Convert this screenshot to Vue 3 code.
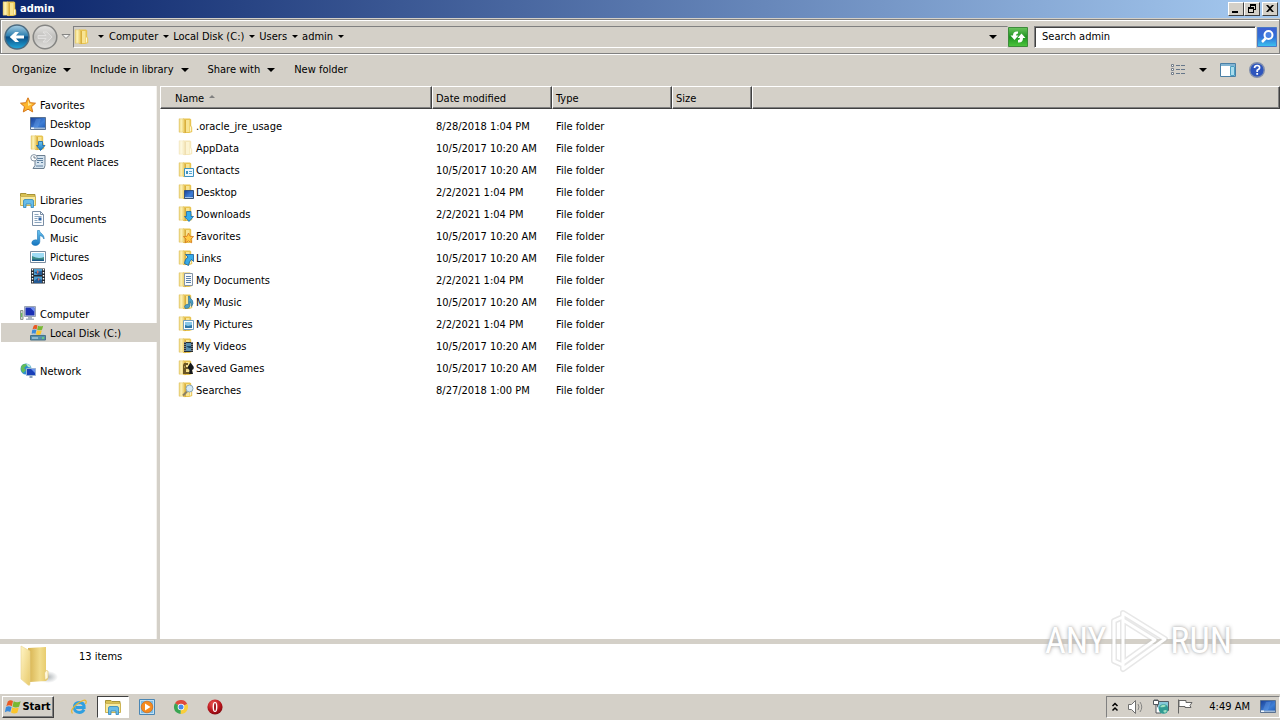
<script setup>
import { ref } from 'vue'

const search = ref('Search admin')
const crumbs = ['Computer', 'Local Disk (C:)', 'Users', 'admin']
const commands = [
  { label: 'Organize', menu: true },
  { label: 'Include in library', menu: true },
  { label: 'Share with', menu: true },
  { label: 'New folder', menu: false }
]
const groups = [
  { label: 'Favorites', icon: 'star', items: [
    { label: 'Desktop', icon: 'desktop' },
    { label: 'Downloads', icon: 'downloads' },
    { label: 'Recent Places', icon: 'recent' }
  ] },
  { label: 'Libraries', icon: 'libraries', items: [
    { label: 'Documents', icon: 'document' },
    { label: 'Music', icon: 'music' },
    { label: 'Pictures', icon: 'picture' },
    { label: 'Videos', icon: 'video' }
  ] },
  { label: 'Computer', icon: 'computer', items: [
    { label: 'Local Disk (C:)', icon: 'disk', selected: true }
  ] },
  { label: 'Network', icon: 'network', items: [] }
]
const files = [
  { name: '.oracle_jre_usage', date: '8/28/2018 1:04 PM', badge: '' },
  { name: 'AppData', date: '10/5/2017 10:20 AM', badge: '', hidden: true },
  { name: 'Contacts', date: '10/5/2017 10:20 AM', badge: 'b-contact' },
  { name: 'Desktop', date: '2/2/2021 1:04 PM', badge: 'b-desktop' },
  { name: 'Downloads', date: '2/2/2021 1:04 PM', badge: 'b-down' },
  { name: 'Favorites', date: '10/5/2017 10:20 AM', badge: 'b-star' },
  { name: 'Links', date: '10/5/2017 10:20 AM', badge: 'b-link' },
  { name: 'My Documents', date: '2/2/2021 1:04 PM', badge: 'b-doc' },
  { name: 'My Music', date: '10/5/2017 10:20 AM', badge: 'b-music' },
  { name: 'My Pictures', date: '2/2/2021 1:04 PM', badge: 'b-picture' },
  { name: 'My Videos', date: '10/5/2017 10:20 AM', badge: 'b-video' },
  { name: 'Saved Games', date: '10/5/2017 10:20 AM', badge: 'b-game' },
  { name: 'Searches', date: '8/27/2018 1:00 PM', badge: 'b-search' }
]
const pinned = [
  { icon: 'ie', label: 'Internet Explorer' },
  { icon: 'libraries', label: 'Windows Explorer', active: true },
  { icon: 'player', label: 'Media Player' },
  { icon: 'chrome', label: 'Chrome' },
  { icon: 'opera', label: 'Opera' }
]
</script>

<template>
  <div class="screen">
    <svg class="defs" aria-hidden="true">
      <defs>
        <linearGradient id="gFold" x1="0" x2="1"><stop offset="0" stop-color="#e9cf72" /><stop offset=".35" stop-color="#fdf3b8" /><stop offset="1" stop-color="#e6c04c" /></linearGradient>
        <linearGradient id="gBig" x1="0" x2="1" y2="1"><stop offset="0" stop-color="#fff4c4" /><stop offset="1" stop-color="#e8ca6c" /></linearGradient>
        <linearGradient id="gBigBack" x1="0" x2="1"><stop offset="0" stop-color="#d6b14e" /><stop offset=".6" stop-color="#f1dc8c" /><stop offset="1" stop-color="#e5c764" /></linearGradient>
        <linearGradient id="gBlue" x1="0" y1="0" x2="1" y2="1"><stop offset="0" stop-color="#183f96" /><stop offset=".6" stop-color="#3f7fd6" /><stop offset="1" stop-color="#1c56b0" /></linearGradient>
        <linearGradient id="gSky" x1="0" y1="0" x2="0" y2="1"><stop offset="0" stop-color="#6cc6f2" /><stop offset="1" stop-color="#1575bf" /></linearGradient>
        <linearGradient id="gSearch" x1="0" y1="0" x2="0" y2="1"><stop offset="0" stop-color="#3f5fd0" /><stop offset=".5" stop-color="#2f6fd8" /><stop offset="1" stop-color="#3cc4f0" /></linearGradient>
        <linearGradient id="gGreen" x1="0" y1="0" x2="0" y2="1"><stop offset="0" stop-color="#6cc45e" /><stop offset=".5" stop-color="#1d9420" /><stop offset="1" stop-color="#4cc63c" /></linearGradient>
        <linearGradient id="gBack" x1="0" y1="0" x2="0" y2="1"><stop offset="0" stop-color="#a9cfe4" /><stop offset=".45" stop-color="#2d7fb0" /><stop offset=".5" stop-color="#0a4d85" /><stop offset="1" stop-color="#22a9dc" /></linearGradient>
        <linearGradient id="gFwd" x1="0" y1="0" x2="0" y2="1"><stop offset="0" stop-color="#e6e5e3" /><stop offset=".5" stop-color="#c0bfbc" /><stop offset="1" stop-color="#e0dfdc" /></linearGradient>
        <radialGradient id="gRed" cx=".4" cy=".3" r=".8"><stop offset="0" stop-color="#ee5a55" /><stop offset=".6" stop-color="#b5121a" /><stop offset="1" stop-color="#6f060c" /></radialGradient>
        <radialGradient id="gShade"><stop offset="0" stop-color="#7d868b" stop-opacity=".6" /><stop offset="1" stop-color="#7d868b" stop-opacity="0" /></radialGradient>
      </defs>
      <symbol id="folder" viewBox="0 0 16 16">
        <path d="M5 .5h7l1.200 1v6l1 2v4.500l-3 1H5z" fill="#e8c450" />
        <path d="M8 2h3.500v12H8z" fill="#f8e493" /><path d="M12 8.500h1.200v5H12z" fill="#fff6cc" />
        <path d="M1 .8h4.500l1.700 1.500V15L5 14.200H1z" fill="url(#gFold)" stroke="#dcbb5a" stroke-width=".4" />
        <path d="M7.300 2v13" stroke="#cfa535" stroke-width=".8" />
      </symbol>
      <symbol id="star" viewBox="0 0 16 16"><path d="M8 .8l2.200 4.900 5.300.5-4 3.500 1.200 5.200L8 12.200l-4.700 2.700 1.200-5.200-4-3.500 5.300-.5z" fill="#fdb62c" stroke="#d5761a" /><path d="M8 3l1.200 3.500 3 .4L8 9z" fill="#ffe99a" /></symbol>
      <symbol id="desktop" viewBox="0 0 16 16"><path d="M.5 1.500h15v12H.5z" fill="url(#gBlue)" stroke="#5b7291" /><path d="M1 11.500h14V13H1z" fill="#9fb9d6" /><path d="M1 11.500h3V13H1z" fill="#f3f8fd" /><path d="M6 3h5L8 11H3z" fill="#6ea4ea" opacity=".35" /></symbol>
      <symbol id="downloads" viewBox="0 0 16 16"><use href="#folder" /><path d="M8.500 6.500h4v4H15L10.500 15.500 6.500 10.500h2z" fill="url(#gSky)" stroke="#1663a4" stroke-width=".8" /></symbol>
      <symbol id="recent" viewBox="0 0 16 16"><path d="M5 1.500h10v10l-1 3H3l2-3z" fill="#d6e4ef" stroke="#6c7f91" /><path d="M7 4.500h6M7 6.500h6M7 8.500h2m2 0h2M6 12h7" stroke="#5e7f9e" /><circle cx="4" cy="3.800" r="3.200" fill="#fff" stroke="#8796a5" /><path d="M4 2v2h2" fill="none" stroke="#4f5f70" stroke-width=".8" /></symbol>
      <symbol id="libraries" viewBox="0 0 16 16"><path d="M.5 1.500H6l1 1h8v3H.5z" fill="#d8c153" stroke="#a79338" /><path d="M.5 4.500h15v9H.5z" fill="#f7eaa0" stroke="#cdb454" /><path d="M3.500 15.500V9q0-1.500 1.500-1.500h7q1.500 0 1.500 1.500v6.500h-2.500V12h-5v3.500z" fill="#68bce8" stroke="#2d85bd" stroke-width=".8" /></symbol>
      <symbol id="document" viewBox="0 0 16 16"><path d="M2.500.5h8l3 3v11h-11z" fill="#fcfdff" stroke="#7b8fa6" /><path d="M10.500.5v3h3" fill="none" stroke="#7b8fa6" /><path d="M4.500 3.500h4m-4 2h7m-7 2h3m-3 2h3m-3 2h7" stroke="#8ba5bd" /><path d="M8.500 6.500h3v3h-3z" fill="#2e65a7" /></symbol>
      <symbol id="music" viewBox="0 0 16 16"><path d="M7.500.5h2c0 3 5 3.500 4.500 8.500-1-2.500-2.500-3-4.200-3.500v6c0 5-8 5-8 1.500 0-2.500 3-3.800 5.700-2.800z" fill="url(#gSky)" stroke="#1b76b5" stroke-width=".6" /></symbol>
      <symbol id="picture" viewBox="0 0 16 16"><path d="M.5 2.500h15v11H.5z" fill="#fff" stroke="#7b8da0" /><path d="M2 4h12v8H2z" fill="#9fdcf5" /><path d="M2 7q4 2 7 2t5-1v4H2z" fill="#3e8d87" /><path d="M2 10.500h12V12H2z" fill="#195989" /></symbol>
      <symbol id="video" viewBox="0 0 16 16"><path d="M1 .5h14v15H1z" fill="#22282f" /><path d="M4 1h8v6H4zM4 8.500h8V15H4z" fill="#4d9dd0" /><path d="M4 4l4 3h4V3zM4 13l4-3 4 2v3H4z" fill="#245a94" /><path d="M7 2l2 2-2 2zM8 10l2 1-2 2z" fill="#c96f68" /><path d="M2.500 1v14m11-14v14" stroke="#fff" stroke-width="1.400" stroke-dasharray="1.500 1.500" /></symbol>
      <symbol id="computer" viewBox="0 0 16 16"><path d="M4.500.5h11v10h-11z" fill="#d6dce6" stroke="#9aa5b3" /><path d="M5.500 1.500h9v8h-9z" fill="#1a30b4" /><path d="M10 1.500h4.500V6z" fill="#6c8df0" /><path d="M8 11h4v1.500h2V14H6v-1.500h2z" fill="#a7b3c1" /><path d="M.5 4.500h2.500v9H.5z" fill="#cbd6ce" stroke="#8b968f" /><path d="M1.700 7v4" stroke="#54b84a" /></symbol>
      <symbol id="winlogo" viewBox="0 0 16 16"><path d="M2.800 2.500Q5.200.3 8 2L6.800 7.200Q4 5.500 1.300 7.200z" fill="#ea5a24" /><path d="M8.700 2.300q3.300 1.700 7 0L14 7.700q-3.500 1.500-6.500-.2z" fill="#78b833" /><path d="M1 8q2.700-1.700 5.600.1l-1.300 5Q2.800 11.500-.2 13.300z" fill="#3a8bdb" /><path d="M7.300 8.300q3.200 1.700 6.500.1L12.300 13.800q-3.200 1.600-6.300-.3z" fill="#fbc52c" /></symbol>
      <symbol id="disk" viewBox="0 0 16 16"><path d="M.5 12l2-3.500h11l2 3.500z" fill="#b4c7d2" /><path d="M.5 10.500h15v4.500H.5z" fill="#5590ae" stroke="#497287" /><path d="M2 13h6" stroke="#d1e5ef" /><path d="M12 12.500h2v1h-2z" fill="#7aff54" /><use href="#winlogo" x="1.500" y="-1" width="12" height="12" /></symbol>
      <symbol id="network" viewBox="0 0 16 16"><circle cx="6" cy="6" r="5.500" fill="#2d8ed0" /><path d="M2 2q4-2 5 0L4 5l2 2-3 3Q-.5 7 2 2z" fill="#63bd58" /><path d="M6 .8q4 0 5 4L8 4z" fill="#b8ead2" /><path d="M6.500 5.500h9v7h-9z" fill="#1940b8" stroke="#9ab3d3" /><path d="M9.500 13h3v2h-3z" fill="#8ba1bc" /><path d="M11 6h4v4z" fill="#6a94ee" /></symbol>
      <symbol id="b-contact" viewBox="0 0 16 16"><path d="M6.500 6.500h9v8h-9z" fill="#eef8ff" stroke="#3d92bf" /><path d="M8 9h2v3H8z" fill="#3d92bf" /><path d="M11 9.500h3m-3 2h3" stroke="#5ba7ce" /></symbol>
      <symbol id="b-desktop" viewBox="0 0 16 16"><path d="M6.500 6.500h9v8h-9z" fill="url(#gBlue)" stroke="#38547a" /><path d="M7 13.500h8" stroke="#a9c7ea" /></symbol>
      <symbol id="b-down" viewBox="0 0 16 16"><path d="M8.500 5.500h4.500v5h2.500L11 15.500 6.500 10.500h2z" fill="#35aeee" stroke="#1767a7" stroke-width=".8" /></symbol>
      <symbol id="b-star" viewBox="0 0 16 16"><path d="M10.500 5l1.500 3.300 3.600.3-2.700 2.500.8 3.700-3.200-1.900-3.300 1.900.9-3.700-2.700-2.500 3.600-.3z" fill="#ffcb45" stroke="#d5761a" stroke-width=".8" /></symbol>
      <symbol id="b-link" viewBox="0 0 16 16"><path d="M7.500 4.500h8v7l-2-2q-2.500 2-3 6l-4-2q0-4 3.500-6.500z" fill="#38aae6" stroke="#155f9d" stroke-width=".8" /></symbol>
      <symbol id="b-doc" viewBox="0 0 16 16"><path d="M6.500 1.500h8v12h-8z" fill="#f8fafc" stroke="#8594a5" /><path d="M8 4.500h5m-5 2h5m-5 2h5m-5 2h5" stroke="#5d82ad" /></symbol>
      <symbol id="b-music" viewBox="0 0 16 16"><path d="M10.500 2h1q0 2 3 4.500 1.500 3-1 6 0-3-1.500-5v4.500q-1 3-4.500 2.500-2-2 0-3.500 1.500-1 3-.5z" fill="#4c9ec4" stroke="#256b93" stroke-width=".6" /></symbol>
      <symbol id="b-picture" viewBox="0 0 16 16"><path d="M5.500 4.500h10v9h-10z" fill="#fafdff" stroke="#75a0bd" /><path d="M7 6h7v6H7z" fill="#87c7e8" /><path d="M7 9l3 1 4-1v3H7z" fill="#2d76a7" /></symbol>
      <symbol id="b-video" viewBox="0 0 16 16"><path d="M6 4h9v10H6z" fill="#262d34" /><path d="M8 5h5v8H8z" fill="#588fae" /><path d="M8 8l3 2h2V8z" fill="#1c496b" /><path d="M7 4v10m7-10v10" stroke="#fff" stroke-width=".8" stroke-dasharray="1 1" /></symbol>
      <symbol id="b-game" viewBox="0 0 16 16"><path d="M6 3h4v2H8v2h2v2H8v3h3v2H5V5z" fill="#6b5725" /><path d="M12.500 2.500l3 4q1 3-1.500 3.500l1 4h-4l.5-4q-2-1-1.500-3.500z" fill="#17191b" /><path d="M6 7h1m1 3h2" stroke="#e9d078" /></symbol>
      <symbol id="b-search" viewBox="0 0 16 16"><path d="M9 9.500l-4 4" stroke="#8b8162" stroke-width="2" /><circle cx="11.500" cy="6.500" r="3.500" fill="#d4e9f5" stroke="#8aa6b6" /></symbol>
      <symbol id="ie" viewBox="0 0 16 16"><path d="M13 10.500q-1.500 3-4.700 3Q3.300 13.200 3.300 8.500T8.300 3.500q4.900 0 4.900 5H5" fill="none" stroke="#2f9fe0" stroke-width="2.800" /><path d="M1.500 14.500Q-1.500 11 6 5q7.500-5.500 9-3 .6 1.300-.6 3" fill="none" stroke="#e9b62f" stroke-width="1.200" /></symbol>
      <symbol id="player" viewBox="0 0 16 16"><path d="M.5.5h15v15H.5z" fill="#bfe0f5" stroke="#4a86b4" /><path d="M2 2h12v12H2z" fill="#7dbbe3" /><circle cx="8" cy="8" r="5.800" fill="#f68a1d" stroke="#d26208" stroke-width=".6" /><path d="M6 4.500L11.500 8 6 11.500z" fill="#fff" /></symbol>
      <symbol id="chrome" viewBox="0 0 16 16"><path d="M8 8L2 4.300A7 7 0 0 1 14.200 5z" fill="#de4a3c" /><path d="M8 8l6.300-3A7 7 0 0 1 7.500 15z" fill="#f9ce3b" /><path d="M8 8L7.500 15A7 7 0 0 1 2 4.300z" fill="#39a552" /><circle cx="8" cy="8" r="3.300" fill="#fff" /><circle cx="8" cy="8" r="2.500" fill="#4689ec" /></symbol>
      <symbol id="opera" viewBox="0 0 16 16"><circle cx="8" cy="8" r="7.600" fill="url(#gRed)" /><ellipse cx="8" cy="8" rx="2.400" ry="5" fill="#fff" /><ellipse cx="8" cy="8" rx="1" ry="4" fill="#9e161b" /></symbol>
      <symbol id="back" viewBox="0 0 26 26"><circle cx="13" cy="13" r="12" fill="url(#gBack)" stroke="#4d6b80" stroke-width="1.500" /><path d="M20 11.500h-8l3-3.500h-3.800L5.800 13l5.400 5H15l-3-3.500h8z" fill="#fff" /></symbol>
      <symbol id="forward" viewBox="0 0 26 26"><circle cx="13" cy="13" r="11.800" fill="url(#gFwd)" stroke="#858583" stroke-width="1.500" /><path d="M6 11.500h8L11 8h3.800l5.400 5-5.400 5H11l3-3.500H6z" fill="#d0cfcd" stroke="#e6e5e3" stroke-width=".8" /></symbol>
      <symbol id="refresh" viewBox="0 0 20 20"><path d="M.5.5h19v19H.5z" fill="url(#gGreen)" stroke="#3d8b3a" /><path d="M10 4.500Q5 4 5 8.500H2.500l4 4.500 4-4.500H8q0-2 2-2z" fill="#fff" /><path d="M10 15.500q5 .5 5-4.500h2.500l-4-4.500-4 4.500H12q0 2-2 2z" fill="#fff" /></symbol>
      <symbol id="find" viewBox="0 0 20 20"><path d="M.5.5h19v19H.5z" fill="url(#gSearch)" stroke="#4a79c5" /><circle cx="11.500" cy="8" r="4" fill="#4a82e4" stroke="#fff" stroke-width="2" /><path d="M8.500 11.500L5 15" stroke="#fff" stroke-width="2.500" /></symbol>
      <symbol id="views" viewBox="0 0 16 14"><path d="M1.500 1.500h2v2h-2zm0 4h2v2h-2zm0 4h2v2h-2z" fill="#fff" stroke="#737d89" /><path d="M6 2.500h4m1 0h4M6 6.500h4m1 0h4m-9 4h4m1 0h4" stroke="#66778a" /></symbol>
      <symbol id="pane" viewBox="0 0 16 14"><path d="M.5.5h15v13H.5z" fill="#fff" stroke="#4a7fa5" /><path d="M1 1h14v2H1z" fill="#81b4d3" /><path d="M10.500 3.500h4v9h-4z" fill="#a9dced" stroke="#4b9fc2" /></symbol>
      <symbol id="help" viewBox="0 0 16 16"><circle cx="8" cy="8" r="7.300" fill="#2e55bd" stroke="#8390ad" stroke-width="1.400" /><path d="M5.500 6q.2-2.500 2.700-2.500T10.600 6Q10.300 7.300 8.200 8.200V10" fill="none" stroke="#fff" stroke-width="1.700" /><path d="M7.300 11h1.800v1.800H7.300z" fill="#fff" /></symbol>
      <symbol id="sound" viewBox="0 0 18 16"><path d="M1.500 5.500h3l4-4v13l-4-4h-3z" fill="#fff" stroke="#70706f" /><path d="M11 5q2 3 0 6m2-8q3.500 5 0 10" fill="none" stroke="#858583" /></symbol>
      <symbol id="net" viewBox="0 0 16 16"><path d="M4.500 2.500h11v9h-11z" fill="#85c8d9" stroke="#525c64" /><path d="M.5 1.500h5v4h-5zM3 5.500V14h5" fill="#fff" stroke="#50575d" /><path d="M2 0v2m2-2v2" stroke="#50575d" /><circle cx="10.500" cy="10" r="4.800" fill="#309b93" /><path d="M7 8q3-4 6-1-3 2-6 1zM10 12q3-2 4 0l-2 2z" fill="#9de0c1" /></symbol>
      <symbol id="flag" viewBox="0 0 16 16"><path d="M1.500.5v14M2 1.500h7v2h6l-2 3 1 2H8v-1H2z" fill="#fff" stroke="#666665" /></symbol>
      <symbol id="bigfolder" viewBox="0 0 38 42">
        <ellipse cx="28" cy="32" rx="10" ry="6" fill="url(#gShade)" />
        <path d="M8 3l18-1v24l2 2v6l-2 2-16 1z" fill="url(#gBigBack)" />
        <path d="M24.500 28q1.500-4 3.500-2v7l-3 2z" fill="#fff8dc" stroke="#dfc269" stroke-width=".6" />
        <path d="M1 1l9 5v33q0 2-2 1l-7-6z" fill="url(#gBig)" stroke="#e8d591" stroke-width=".6" />
      </symbol>
    </svg>

    <header class="title">
      <svg class="i16"><use href="#folder" /></svg>
      <h1>admin</h1>
      <div class="winbtns">
        <button aria-label="Minimize"><svg viewBox="0 0 12 10"><path d="M2 7h6v2H2z" /></svg></button>
        <button aria-label="Restore"><svg viewBox="0 0 12 10"><path d="M4 0h6v6H8V5h1V2H5v1H4zM2 3h6v6H2zm1 2v3h4V5z" fill-rule="evenodd" /></svg></button>
        <button class="close" aria-label="Close"><svg viewBox="0 0 12 10"><path d="M2 1h2l2 2 2-2h2L7 4.500 10 8H8L6 6 4 8H2l3-3.500z" /></svg></button>
      </div>
    </header>

    <nav class="navbar" aria-label="Address">
      <button class="round" aria-label="Back"><svg><use href="#back" /></svg></button>
      <button class="round" aria-label="Forward"><svg><use href="#forward" /></svg></button>
      <button class="recentmenu" aria-label="Recent pages"><svg viewBox="0 0 10 6"><path d="M1 .5h8l-4 4z" fill="#f4f3f1" stroke="#858583" /></svg></button>
      <div class="address">
        <svg class="i16"><use href="#folder" /></svg>
        <span class="sep first"><i class="tri" /></span>
        <template v-for="c in crumbs" :key="c">
          <a href="#">{{ c }}</a><span class="sep"><i class="tri" /></span>
        </template>
        <button class="history" aria-label="Previous locations"><i class="tri big" /></button>
      </div>
      <button class="square" aria-label="Refresh"><svg><use href="#refresh" /></svg></button>
      <input v-model="search" class="search" type="text" aria-label="Search admin" />
      <button class="square" aria-label="Search"><svg><use href="#find" /></svg></button>
    </nav>

    <div class="commands">
      <button v-for="c in commands" :key="c.label">{{ c.label }}<i v-if="c.menu" class="tri big" /></button>
      <div class="right">
        <button aria-label="Change view"><svg class="w16"><use href="#views" /></svg></button>
        <button aria-label="More view options"><i class="tri big" /></button>
        <button aria-label="Preview pane"><svg class="w16"><use href="#pane" /></svg></button>
        <button aria-label="Help"><svg class="i16"><use href="#help" /></svg></button>
      </div>
    </div>

    <main>
      <aside>
        <section v-for="g in groups" :key="g.label">
          <a href="#" class="node"><svg class="i16"><use :href="'#' + g.icon" /></svg><span>{{ g.label }}</span></a>
          <a v-for="n in g.items" :key="n.label" href="#" class="node child" :class="{ selected: n.selected }"><svg class="i16"><use :href="'#' + n.icon" /></svg><span>{{ n.label }}</span></a>
        </section>
      </aside>
      <div class="list">
        <table>
          <colgroup><col class="c-name" /><col class="c-mid" /><col class="c-mid" /><col class="c-size" /><col /></colgroup>
          <thead>
            <tr><th>Name <i class="sort" /></th><th>Date modified</th><th>Type</th><th>Size</th><th></th></tr>
          </thead>
          <tbody>
            <tr v-for="f in files" :key="f.name">
              <td><div class="file"><svg class="i16" :class="{ faded: f.hidden }"><use href="#folder" /><use v-if="f.badge" :href="'#' + f.badge" /></svg><span>{{ f.name }}</span></div></td>
              <td>{{ f.date }}</td><td>File folder</td><td></td><td></td>
            </tr>
          </tbody>
        </table>
      </div>
    </main>

    <section class="details">
      <svg><use href="#bigfolder" /></svg>
      <p>{{ files.length }} items</p>
      <div class="watermark">
        <span>ANY</span>
        <svg viewBox="0 0 60 64">
          <g fill="none" stroke-linejoin="round">
            <path d="M15 54V4l42 26-42 30v-6l32-23-32-20M15 8l-9 4v40l9 4" stroke="#c4c4c4" stroke-width="6" opacity=".4" />
            <path d="M15 54V4l42 26-42 30v-6l32-23-32-20M15 8l-9 4v40l9 4" stroke="#fff" stroke-width="3" />
          </g>
        </svg>
        <span>RUN</span>
      </div>
    </section>

    <footer>
      <button class="start"><svg class="i16"><use href="#winlogo" /></svg>Start</button>
      <div class="pinned">
        <button v-for="p in pinned" :key="p.label" :aria-label="p.label" :class="{ active: p.active }"><svg class="i16"><use :href="'#' + p.icon" /></svg></button>
      </div>
      <div class="tray">
        <button aria-label="Show hidden icons"><svg class="chev" viewBox="0 0 8 10"><path d="M1.500 4L4 1.500 6.500 4M1.500 8.500L4 6l2.500 2.500" fill="none" stroke="#000" stroke-width="1.500" /></svg></button>
        <svg class="snd"><use href="#sound" /></svg>
        <svg class="i16"><use href="#net" /></svg>
        <svg class="i16"><use href="#flag" /></svg>
        <time>4:49 AM</time>
        <svg class="i16"><use href="#desktop" /></svg>
      </div>
    </footer>
  </div>
</template>

<style>
body { margin: 0; }
</style>

<style scoped>
* { box-sizing: border-box; }
.screen { display: flex; flex-direction: column; height: 100vh; overflow: hidden; background: #d4d0c8; color: #000; font: 11px/14px "DejaVu Sans Condensed", "Noto Sans", sans-serif; }
.defs { position: absolute; width: 0; height: 0; }
button { font: inherit; color: inherit; background: none; border: 0; padding: 0; display: flex; align-items: center; justify-content: center; }
a { color: inherit; text-decoration: none; }
svg { flex: none; display: block; }
.i16 { width: 16px; height: 16px; }
.w16 { width: 16px; height: 14px; }
.tri { display: block; width: 0; height: 0; border: 3px solid transparent; border-top-color: #000; border-bottom: 0; }
.tri.big { border-width: 4px 4px 0; }

.title { display: flex; align-items: center; height: 18px; padding: 0 2px; gap: 2px; background: linear-gradient(90deg, #0a246a, #a6caf0); color: #fff; }
.title h1 { margin: 0; font-size: 11px; line-height: 14px; font-weight: bold; }
.winbtns { display: flex; margin-left: auto; }
.winbtns button { width: 16px; height: 14px; background: #d4d0c8; border: 1px solid; border-color: #fff #404040 #404040 #fff; }
.winbtns svg { width: 12px; height: 10px; }
.winbtns .close { margin-left: 2px; }

.navbar { display: flex; align-items: center; height: 35px; margin-top: 1px; padding: 0 2px; border: 1px solid #808080; box-shadow: inset 1px 1px #fff, 0 1px #fff; }
.round { width: 28px; }
.round svg { width: 26px; height: 26px; }
.recentmenu { width: 13px; }
.recentmenu svg { width: 10px; height: 6px; }
.address { display: flex; flex: 1; align-items: center; height: 22px; border: 1px solid; border-color: #808080 #d4d0c8 #fff #808080; margin-left: 1px; }
.sep { display: flex; justify-content: center; width: 15px; }
.sep.first { width: 17px; margin-left: 2px; }
.history { width: 16px; margin-left: auto; margin-right: 6px; }
.square svg { width: 20px; height: 20px; }
.search { width: 222px; height: 22px; margin: 0 1px 0 6px; padding: 0 7px; font: inherit; color: #000; background: #fff; border: 1px solid; border-color: #808080 #fff #fff #808080; box-shadow: inset 1px 1px #404040; border-radius: 0; outline: 0; }

.commands { display: flex; align-items: center; height: 30px; padding: 0 15px 0 12px; gap: 19px; margin-top: 2px; padding-bottom: 2px; }
.commands button { gap: 7px; }
.right { display: flex; align-items: center; margin-left: auto; gap: 13px; }

main { display: flex; flex: 1; min-height: 0; border-bottom: 1px solid #d4d0c8; }
aside { width: 160px; padding: 9px 0 0 1px; background: #fff; border-right: 3px solid #d4d0c8; box-shadow: inset -1px 0 #f4f2ee; }
aside section { margin-bottom: 19px; }
.node { display: flex; align-items: center; gap: 4px; height: 19px; padding-left: 19px; }
.node span, .file span { padding-top: 2px; }
.child { padding-left: 29px; }
.selected { background: #d4d0c8; }
.list { flex: 1; background: #fff; }
table { width: 100%; table-layout: fixed; border-collapse: separate; border-spacing: 0; }
.c-name { width: 272px; }
.c-mid { width: 120px; }
.c-size { width: 80px; }
th { height: 23px; padding: 2px 3px 0; text-align: left; font-weight: normal; background: #d4d0c8; border: 1px solid; border-color: #fff #404040 #404040 #fff; box-shadow: inset -1px -1px #808080; }
th:first-child { padding-left: 14px; }
.sort { display: inline-block; margin: 0 0 4px 2px; border: 3px solid transparent; border-bottom-color: #808080; border-top: 0; }
tbody tr:first-child td { height: 28px; padding-top: 8px; }
tbody tr:first-child td:first-child { padding-top: 6px; }
td { height: 22px; padding: 2px 4px 0; }
td:first-child { padding-top: 0; }
.file { display: flex; align-items: center; gap: 2px; padding-left: 14px; }
.faded { opacity: .4; }

.details { position: relative; display: flex; height: 53px; background: #fff; border-top: 4px solid #d4d0c8; padding-left: 20px; gap: 21px; }
.details > svg { width: 38px; height: 42px; margin-top: 1px; }
.details p { margin: 6px 0 0; }
.watermark { position: absolute; right: 48px; top: -35px; display: flex; align-items: center; gap: 2px; color: #fff; font: 36px/64px "Roboto Condensed", "Open Sans Condensed", Roboto, sans-serif; text-shadow: 0 0 4px #aaa, 0 0 2px #ccc; }
.watermark svg { width: 60px; height: 64px; }

footer { display: flex; align-items: center; height: 27px; padding: 0 0 1px 2px; border-top: 1px solid #fff; box-shadow: 0 -1px #d4d0c8; }
.start { width: 52px; height: 22px; gap: 1px; font-weight: bold; border: 1px solid; border-color: #fff #404040 #404040 #fff; box-shadow: inset -1px -1px #808080; }
.pinned { display: flex; margin-left: 9px; gap: 2px; }
.pinned button { width: 32px; height: 22px; }
.pinned .active { background: #fff; border: 1px solid; border-color: #404040 #fff #fff #404040; }
.tray { display: flex; align-items: center; gap: 8px; height: 22px; margin-left: auto; padding: 0 3px 0 4px; border: 1px solid; border-color: #808080 #fff #fff #808080; }
.chev { width: 8px; height: 10px; }
.snd { width: 18px; height: 16px; }
.tray time { margin: 0 2px 0 8px; }
</style>
